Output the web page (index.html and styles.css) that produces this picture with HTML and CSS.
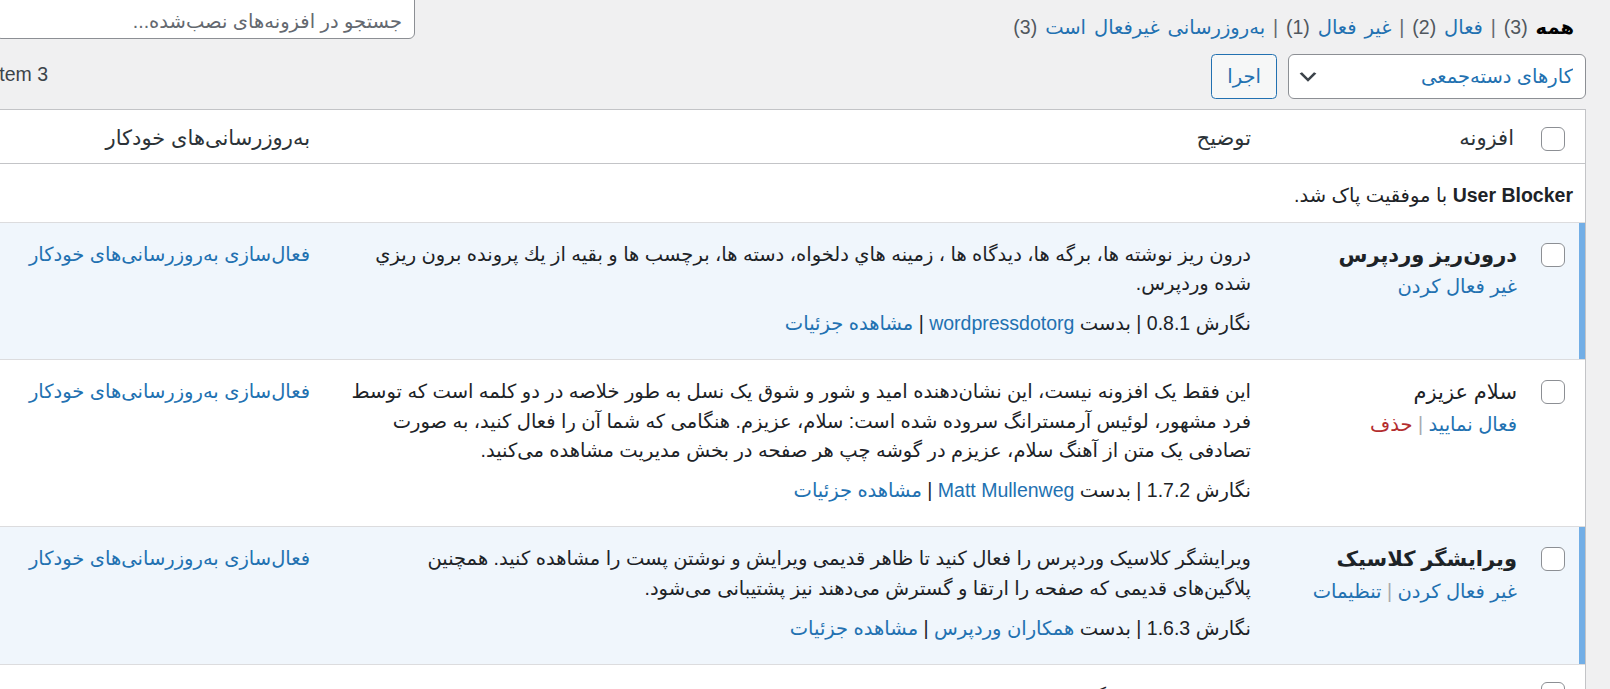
FILE: index.html
```html
<!DOCTYPE html>
<html lang="fa" dir="rtl">
<head>
    <meta charset="UTF-8">
    <title>افزونه‌ها</title>
    <link rel="stylesheet" href="styles.css">
</head>
<body>
<div class="wrap">

    <!-- filters + search -->
    <div class="top-row">
        <ul class="subsubsub">
            <li><a class="current" href="#">همه <span class="count">(3)</span></a> |</li>
            <li><a href="#">فعال <span class="count">(2)</span></a> |</li>
            <li><a href="#">غیر فعال <span class="count">(1)</span></a> |</li>
            <li><a href="#">به&zwnj;روزرسانی غیرفعال است <span class="count">(3)</span></a></li>
        </ul>
        <input type="search" class="search-input" placeholder="جستجو در افزونه&zwnj;های نصب&zwnj;شده...">
    </div>

    <!-- bulk actions -->
    <div class="tablenav">
        <div class="bulk-actions">
            <div class="select-wrap">
                <select class="bulk-select">
                    <option>کارهای دسته&zwnj;جمعی</option>
                    <option>فعال کردن</option>
                    <option>غیر فعال کردن</option>
                </select>
                <svg class="chevron" viewBox="0 0 20 20"><path d="M5 6l5 5 5-5 2 1-7 7-7-7z"/></svg>
            </div>
            <button class="button">اجرا</button>
        </div>
        <div class="displaying-num">3 item</div>
    </div>

    <table class="plugins">
        <colgroup>
            <col class="col-check">
            <col class="col-name">
            <col class="col-desc">
            <col>
        </colgroup>
        <thead>
            <tr>
                <td class="check-column"><input type="checkbox" class="checkbox"></td>
                <th>افزونه</th>
                <th>توضیح</th>
                <th>به&zwnj;روزرسانی&zwnj;های خودکار</th>
            </tr>
        </thead>
        <tbody>
            <tr class="deleted">
                <td colspan="4"><strong>User Blocker</strong> با موفقیت پاک شد.</td>
            </tr>

            <tr class="active">
                <th class="check-column"><input type="checkbox" class="checkbox"></th>
                <td class="plugin-title">
                    <strong>درون&zwnj;ریز وردپرس</strong>
                    <div class="row-actions"><a href="#">غیر فعال کردن</a></div>
                </td>
                <td class="column-description">
                    <p>درون ریز نوشته ها، برگه ها، دیدگاه ها ، زمینه هاي دلخواه، دسته ها، برچسب ها و بقیه از يك پرونده برون ريزي شده وردپرس.</p>
                    <div class="plugin-meta">نگارش 0.8.1 | بدست <a href="#">wordpressdotorg</a> | <a href="#">مشاهده جزئیات</a></div>
                </td>
                <td class="column-auto-updates"><a href="#">فعال&zwnj;سازی به&zwnj;روزرسانی&zwnj;های خودکار</a></td>
            </tr>

            <tr class="inactive">
                <th class="check-column"><input type="checkbox" class="checkbox"></th>
                <td class="plugin-title">
                    <strong>سلام عزیزم</strong>
                    <div class="row-actions"><a href="#">فعال نمایید</a> <span class="sep">|</span> <a href="#" class="delete">حذف</a></div>
                </td>
                <td class="column-description">
                    <p>این فقط یک افزونه نیست، این نشان&zwnj;دهنده امید و شور و شوق یک نسل به طور خلاصه در دو کلمه است که توسط فرد مشهور، لوئیس آرمسترانگ سروده شده است: سلام، عزیزم. هنگامی که شما آن را فعال کنید، به صورت تصادفی یک متن از آهنگ سلام، عزیزم در گوشه چپ هر صفحه در بخش مدیریت مشاهده می&zwnj;کنید.</p>
                    <div class="plugin-meta">نگارش 1.7.2 | بدست <a href="#">Matt Mullenweg</a> | <a href="#">مشاهده جزئیات</a></div>
                </td>
                <td class="column-auto-updates"><a href="#">فعال&zwnj;سازی به&zwnj;روزرسانی&zwnj;های خودکار</a></td>
            </tr>

            <tr class="active">
                <th class="check-column"><input type="checkbox" class="checkbox"></th>
                <td class="plugin-title">
                    <strong>ویرایشگر کلاسیک</strong>
                    <div class="row-actions"><a href="#">غیر فعال کردن</a> <span class="sep">|</span> <a href="#">تنظیمات</a></div>
                </td>
                <td class="column-description">
                    <p>ویرایشگر کلاسیک وردپرس را فعال کنید تا ظاهر قدیمی ویرایش و نوشتن پست را مشاهده کنید. همچنین پلاگین&zwnj;های قدیمی که صفحه را ارتقا و گسترش می&zwnj;دهند نیز پشتیبانی می&zwnj;شود.</p>
                    <div class="plugin-meta">نگارش 1.6.3 | بدست <a href="#">همکاران وردپرس</a> | <a href="#">مشاهده جزئیات</a></div>
                </td>
                <td class="column-auto-updates"><a href="#">فعال&zwnj;سازی به&zwnj;روزرسانی&zwnj;های خودکار</a></td>
            </tr>

            <tr class="inactive after-active">
                <th class="check-column"><input type="checkbox" class="checkbox"></th>
                <td class="plugin-title">
                    <strong>اکیسمت</strong>
                    <div class="row-actions"><a href="#">فعال نمایید</a></div>
                </td>
                <td class="column-description">
                    <p>ضد اسپم برای دیدگاه&zwnj;ها.</p>
                </td>
                <td class="column-auto-updates"><a href="#">به&zwnj;روزرسانی خودکار</a></td>
            </tr>
        </tbody>
    </table>
</div>
</body>
</html>
```

FILE: styles.css
```css
html, body {
    margin: 0;
    height: 100%;
    overflow: hidden;
}

body {
    background-color: #f0f0f1;
    color: #3c434a;
    font-family: "Liberation Sans", "DejaVu Sans", sans-serif;
    font-size: 19.5px;
    line-height: 1.5;
}

a {
    color: #2271b1;
    text-decoration: none;
}

.wrap {
    margin: -6px 24px 0 -5px;
}

/* top row: view filters on the right, search on the left */
.top-row {
    display: flex;
    justify-content: space-between;
    align-items: flex-start;
    height: 45px;
}

.subsubsub {
    list-style: none;
    margin: 19px 12px 0 0;
    padding: 0;
    color: #646970;
    word-spacing: 2.5px;
}

.subsubsub li {
    display: inline;
}

.subsubsub a .count {
    color: #50575e;
    font-weight: 400;
}

.subsubsub a.current {
    color: #000;
    font-weight: 700;
}

.search-input {
    width: 420px;
    height: 45px;
    box-sizing: border-box;
    margin: 0;
    padding: 10px 12px 0;
    border: 1px solid #8c8f94;
    border-radius: 6px;
    background-color: #fff;
    color: #2c3338;
    font: inherit;
}

.search-input::placeholder {
    color: #646970;
}

/* bulk actions bar */
.tablenav {
    display: flex;
    justify-content: space-between;
    align-items: center;
    height: 45px;
    margin: 15px 0 10px;
}

.bulk-actions {
    display: flex;
    gap: 11px;
}

.select-wrap {
    position: relative;
}

.bulk-select {
    appearance: none;
    width: 298px;
    height: 45px;
    margin: 0;
    padding: 0 12px 0 36px;
    border: 1px solid #8c8f94;
    border-radius: 6px;
    background-color: #fff;
    color: #2271b1;
    font: inherit;
}

.chevron {
    position: absolute;
    left: 8px;
    top: 11px;
    width: 24px;
    height: 24px;
    fill: #3c434a;
    pointer-events: none;
}

.button {
    height: 45px;
    margin: 0;
    padding: 0 15px;
    border: 1px solid #2271b1;
    border-radius: 4.5px;
    background-color: #f6f7f7;
    color: #2271b1;
    font: inherit;
    cursor: pointer;
}

.displaying-num {
    align-self: flex-start;
    margin-top: 6px;
    color: #3c434a;
}

/* plugins table */
.plugins {
    width: 100%;
    table-layout: fixed;
    border-collapse: separate;
    border-spacing: 0;
    border: 1px solid #c3c4c7;
    background-color: #fff;
}

.col-check { width: 56px; }
.col-name { width: 263px; }
.col-desc { width: 941px; }

.plugins th,
.plugins td {
    text-align: right;
    vertical-align: top;
    font-weight: 400;
    padding: 17px 15px 21px;
    border-bottom: 1px solid #dcdcde;
}

.plugins thead th,
.plugins thead td {
    font-size: 21px;
    line-height: 1.4;
    color: #2c3338;
    padding: 13px 15px 11px;
    border-bottom-color: #c3c4c7;
}

.plugins .check-column {
    padding: 20px 20px 0 0;
}

.plugins thead .check-column {
    padding: 17px 20px 0 0;
}

.checkbox {
    appearance: none;
    display: block;
    width: 24px;
    height: 24px;
    margin: 0;
    border: 1px solid #8c8f94;
    border-radius: 6px;
    background-color: #fff;
}

.plugins .deleted td {
    padding: 17px 12px 11px;
    color: #1d2327;
}

.plugins .deleted strong {
    font-weight: 700;
}

.plugins tr.active th,
.plugins tr.active td {
    background-color: #f0f6fc;
}

.plugins tr.active .check-column {
    box-shadow: inset -6px 0 0 #72aee6;
}

/* first inactive row under an active one */
.plugins tr.after-active td {
    padding-top: 18px;
}

.plugins tr.after-active .check-column {
    padding-top: 17px;
}

.plugins .plugin-title {
    padding-right: 12px;
    white-space: nowrap;
}

.plugin-title strong {
    display: block;
    margin-bottom: 3px;
    font-size: 21px;
    line-height: 1.4;
    font-weight: 700;
    color: #1d2327;
}

.inactive .plugin-title strong {
    font-weight: 400;
}

.row-actions .sep {
    color: #a7aaad;
}

.row-actions .delete {
    color: #b32d2e;
}

.plugins .column-description {
    padding-left: 20px;
    color: #1d2327;
}

.column-description p {
    margin: 0 0 11px;
}
```
